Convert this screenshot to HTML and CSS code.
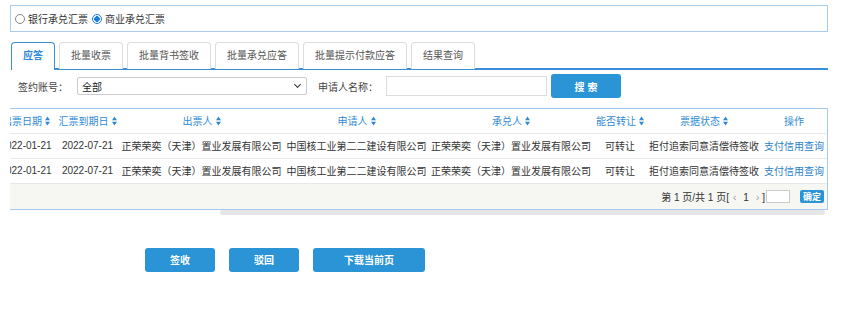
FILE: index.html
```html
<!DOCTYPE html>
<html lang="zh-CN">
<head>
  <meta charset="UTF-8">
  <title>应答</title>
  <link rel="stylesheet" href="styles.css">
</head>
<body>
  <div class="bill-type">
    <label class="radio"><span class="radio-dot"></span>银行承兑汇票</label>
    <label class="radio radio-on"><span class="radio-dot"></span>商业承兑汇票</label>
  </div>

  <ul class="tabs">
    <li class="tab tab-active">应答</li>
    <li class="tab">批量收票</li>
    <li class="tab">批量背书签收</li>
    <li class="tab">批量承兑应答</li>
    <li class="tab">批量提示付款应答</li>
    <li class="tab">结果查询</li>
  </ul>

  <form class="filter">
    <span class="filter-label">签约账号：</span>
    <div class="select">全部<span class="select-arrow"></span></div>
    <span class="filter-label filter-label-2">申请人名称：</span>
    <input class="text-input" type="text">
    <button type="button" class="btn-search">搜 索</button>
  </form>

  <div class="grid">
    <div class="grid-body">
      <table>
        <colgroup>
          <col style="width:60px"><col style="width:63px"><col style="width:165px"><col style="width:145px">
          <col style="width:164px"><col style="width:54px"><col style="width:114px"><col style="width:66px">
        </colgroup>
        <thead>
          <tr>
            <th>出票日期<svg class="sort" viewBox="0 0 5 10"><path d="M0 4.2L2.5 0.5 5 4.2zM0 5.8L2.5 9.5 5 5.8z"/></svg></th>
            <th>汇票到期日<svg class="sort" viewBox="0 0 5 10"><path d="M0 4.2L2.5 0.5 5 4.2zM0 5.8L2.5 9.5 5 5.8z"/></svg></th>
            <th>出票人<svg class="sort" viewBox="0 0 5 10"><path d="M0 4.2L2.5 0.5 5 4.2zM0 5.8L2.5 9.5 5 5.8z"/></svg></th>
            <th>申请人<svg class="sort" viewBox="0 0 5 10"><path d="M0 4.2L2.5 0.5 5 4.2zM0 5.8L2.5 9.5 5 5.8z"/></svg></th>
            <th>承兑人<svg class="sort" viewBox="0 0 5 10"><path d="M0 4.2L2.5 0.5 5 4.2zM0 5.8L2.5 9.5 5 5.8z"/></svg></th>
            <th>能否转让<svg class="sort" viewBox="0 0 5 10"><path d="M0 4.2L2.5 0.5 5 4.2zM0 5.8L2.5 9.5 5 5.8z"/></svg></th>
            <th>票据状态<svg class="sort" viewBox="0 0 5 10"><path d="M0 4.2L2.5 0.5 5 4.2zM0 5.8L2.5 9.5 5 5.8z"/></svg></th>
            <th>操作</th>
          </tr>
        </thead>
        <tbody>
          <tr>
            <td>2022-01-21</td>
            <td>2022-07-21</td>
            <td>正荣荣奕（天津）置业发展有限公司</td>
            <td>中国核工业第二二建设有限公司</td>
            <td>正荣荣奕（天津）置业发展有限公司</td>
            <td>可转让</td>
            <td>拒付追索同意清偿待签收</td>
            <td><a href="#">支付信用查询</a></td>
          </tr>
          <tr>
            <td>2022-01-21</td>
            <td>2022-07-21</td>
            <td>正荣荣奕（天津）置业发展有限公司</td>
            <td>中国核工业第二二建设有限公司</td>
            <td>正荣荣奕（天津）置业发展有限公司</td>
            <td>可转让</td>
            <td>拒付追索同意清偿待签收</td>
            <td><a href="#">支付信用查询</a></td>
          </tr>
        </tbody>
      </table>
    </div>
    <div class="pager">
      <span>第 1 页/共 1 页[<span class="pager-nav">‹</span>1<span class="pager-nav">›</span>]</span>
      <input class="pager-input" type="text">
      <button type="button" class="pager-btn">确定</button>
    </div>
  </div>
  <div class="scrollbar"><span class="scroll-thumb"></span></div>

  <div class="actions">
    <button type="button" class="btn">签收</button>
    <button type="button" class="btn">驳回</button>
    <button type="button" class="btn btn-wide">下载当前页</button>
  </div>
</body>
</html>
```

FILE: styles.css
```css
* {
  margin: 0;
  padding: 0;
  box-sizing: border-box;
  font-family: 'Liberation Sans', 'Noto Sans CJK SC', sans-serif;
}

body {
  background: #fff;
  color: #333;
  font-size: 10px;
  width: 860px;
}

.bill-type {
  margin: 5px 0 0 10px;
  width: 818px;
  height: 27px;
  border: 1px solid #a9cbec;
  display: flex;
  align-items: center;
  padding-left: 4px;
}

.radio {
  display: flex;
  align-items: center;
  margin-right: 4px;
  color: #333;
}

.radio-dot {
  width: 10px;
  height: 10px;
  border: 1px solid #888;
  border-radius: 50%;
  margin-right: 3px;
  background: #fff;
}

.radio-on .radio-dot {
  border-color: #1e7fd8;
  background: radial-gradient(circle, #1e7fd8 0 2.6px, #fff 3px);
}

.tabs {
  list-style: none;
  display: flex;
  margin: 10px 0 0 11px;
  width: 817px;
  height: 28px;
  border-bottom: 2px solid #3a8fd8;
}

.tab {
  height: 27px;
  line-height: 25px;
  padding: 0 11px;
  margin-right: 4px;
  border: 1px solid #ddd;
  border-bottom: 0;
  border-radius: 4px 4px 0 0;
  color: #555;
  background: #fff;
}

.tab-active {
  height: 28px;
  border: 1px solid #3a8fd8;
  border-bottom: 0;
  color: #2d8ad8;
  font-weight: bold;
  position: relative;
  z-index: 1;
}

.filter {
  display: flex;
  align-items: center;
  height: 24px;
  margin: 4px 0 0 18px;
}

.filter-label {
  color: #444;
  width: 59px;
}

.filter-label-2 {
  margin-left: 11px;
  width: 68px;
}

.select {
  width: 230px;
  height: 18px;
  border: 1px solid #ccc;
  border-radius: 2px;
  padding-left: 4px;
  display: flex;
  align-items: center;
  justify-content: space-between;
  color: #222;
}

.select-arrow {
  width: 5px;
  height: 5px;
  border-right: 1.5px solid #333;
  border-bottom: 1.5px solid #333;
  transform: rotate(45deg);
  margin: 0 6px 3px 0;
}

.text-input {
  width: 161px;
  height: 20px;
  border: 1px solid #ddd;
}

.btn-search {
  margin-left: 4px;
  width: 70px;
  height: 24px;
  border: 0;
  border-radius: 3px;
  background: #2a94d6;
  color: #fff;
  font-weight: bold;
  font-size: 10px;
}

.grid {
  margin: 10px 0 0 10px;
  width: 818px;
  border-top: 1px solid #a6c9ec;
  border-right: 1px solid #a6c9ec;
  border-bottom: 1px solid #a6c9ec;
}

.grid-body {
  overflow: hidden;
}

.grid table {
  table-layout: fixed;
  width: 831px;
  margin-left: -14px;
  border-collapse: collapse;
}

.grid th,
.grid td {
  white-space: nowrap;
  text-align: center;
  border-bottom: 1px solid #e8e8e8;
}

.grid th {
  height: 24px;
  color: #2f8ad6;
  font-weight: normal;
}

.grid td {
  height: 25px;
  color: #333;
}

.grid td a {
  color: #2a7fc9;
  text-decoration: none;
}

.sort {
  display: inline-block;
  width: 5px;
  height: 10px;
  margin-left: 3px;
  vertical-align: -1px;
  fill: #2f8ad6;
}

.pager {
  height: 25px;
  background: #f6f7f2;
  display: flex;
  align-items: center;
  justify-content: flex-end;
  padding-right: 3px;
  color: #333;
}

.pager-nav {
  color: #999;
  margin: 0 7px 0 4px;
}

.pager-nav + .pager-nav {
  margin: 0 3px 0 7px;
}

.pager-input {
  width: 24px;
  height: 13px;
  border: 1px solid #ccc;
  margin-left: 1px;
}

.pager-btn {
  margin-left: 10px;
  width: 24px;
  height: 13px;
  border: 0;
  border-radius: 2px;
  background: #2a94d6;
  color: #fff;
  font-size: 9px;
  font-weight: bold;
}

.scrollbar {
  margin-left: 220px;
  width: 605px;
  height: 6px;
}

.scroll-thumb {
  display: block;
  height: 5px;
  background: #e6e6e6;
  border-radius: 3px;
}

.actions {
  display: flex;
  gap: 14px;
  margin: 32px 0 0 145px;
}

.btn {
  width: 70px;
  height: 24px;
  border: 0;
  border-radius: 3px;
  background: #2a94d6;
  color: #fff;
  font-size: 10px;
  font-weight: bold;
}

.btn-wide {
  width: 112px;
}
```
